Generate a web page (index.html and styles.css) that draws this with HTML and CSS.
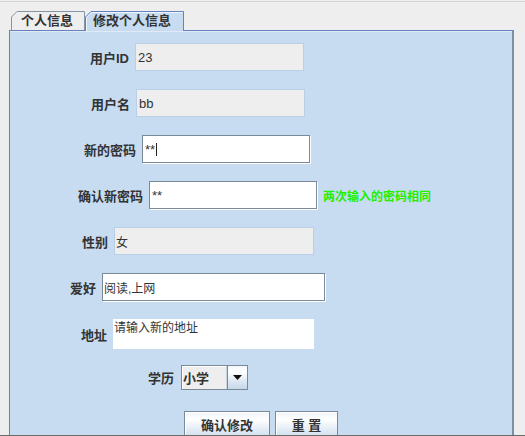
FILE: index.html
```html
<!DOCTYPE html>
<html lang="zh-CN">
<head>
<meta charset="utf-8">
<title>修改个人信息</title>
<link rel="stylesheet" href="styles.css">
</head>
<body>
<div class="page">
  <div class="topline"></div>
  <div class="tabs">
    <div class="tab tab-off">
      <svg class="tab-edge" width="74" height="19" viewBox="0 0 74 19">
        <polygon points="0,19 0,6 6,0 74,0 74,19" fill="#eeeeee"/>
        <polyline points="0.5,19 0.5,6 6,0.5 73.5,0.5 73.5,19" fill="none" stroke="#8595a6"/>
      </svg>
      <span class="tab-text">个人信息</span>
    </div>
    <div class="tab tab-on">
      <svg class="tab-edge" width="99" height="20" viewBox="0 0 99 20">
        <polygon points="0,20 0,6 6,0 99,0 99,20" fill="#c7dcf1"/>
        <polyline points="1.5,20 1.5,6.5 6.5,1.5 97.5,1.5" fill="none" stroke="#eef4fb"/>
        <polyline points="0.5,20 0.5,6 6,0.5 98.5,0.5 98.5,20" fill="none" stroke="#6382bf"/>
      </svg>
      <span class="tab-text">修改个人信息</span>
    </div>
  </div>
  <div class="panel">
    <div class="form">
      <div class="row r1">
        <span class="lbl">用户ID</span>
        <div class="field ro w169">23</div>
      </div>
      <div class="row r2">
        <span class="lbl">用户名</span>
        <div class="field ro w169">bb</div>
      </div>
      <div class="row r3">
        <span class="lbl">新的密码</span>
        <div class="field ed w168"><span class="pw">**</span><span class="caret"></span></div>
      </div>
      <div class="row r4">
        <span class="lbl">确认新密码</span>
        <div class="field ed w168"><span class="pw">**</span></div>
        <span class="hint">两次输入的密码相同</span>
      </div>
      <div class="row r5">
        <span class="lbl">性别</span>
        <div class="field ro w200 cjk">女</div>
      </div>
      <div class="row r6">
        <span class="lbl">爱好</span>
        <div class="field ed w223 cjk">阅读,上网</div>
      </div>
      <div class="row r7">
        <span class="lbl">地址</span>
        <div class="area">请输入新的地址</div>
      </div>
      <div class="row r8">
        <span class="lbl">学历</span>
        <div class="combo">
          <span class="combo-text">小学</span>
          <span class="combo-btn">
            <svg width="9" height="5" viewBox="0 0 9 5"><polygon points="0,0 9,0 4.5,5" fill="#111"/></svg>
          </span>
        </div>
      </div>
      <div class="btns">
        <button class="btn b1">确认修改</button>
        <button class="btn b2">重 置</button>
      </div>
    </div>
  </div>
  <div class="bottomline"></div>
</div>
</body>
</html>
```
FILE: styles.css
```css
* { box-sizing: border-box; }
html, body { margin: 0; padding: 0; }
body {
  background: #eeeeee;
  font-family: "Liberation Sans", "Noto Sans CJK SC", sans-serif;
  color: #333333;
}
.page {
  width: 525px;
  height: 436px;
  overflow: hidden;
}
.topline {
  margin-top: 1px;
  height: 1px;
  background: #d2d2d2;
}
.tabs {
  display: flex;
  align-items: flex-start;
  height: 19px;
  margin-top: 9px;
  padding-left: 11px;
}
.tab {
  position: relative;
  font-size: 13px;
  font-weight: bold;
  color: #333333;
  white-space: nowrap;
}
.tab-edge {
  position: absolute;
  left: 0;
  top: 0;
  display: block;
}
.tab-text {
  position: relative;
  display: block;
}
.tab-off {
  width: 74px;
  height: 19px;
  line-height: 19px;
  padding-left: 10px;
}
.tab-on {
  width: 99px;
  height: 20px;
  line-height: 19px;
  padding-left: 8px;
  z-index: 1;
}
.panel {
  margin-left: 9px;
  width: 505px;
  height: 405px;
  overflow: hidden;
  background: #c7dcf1;
  border-top: 1px solid #6382bf;
  border-left: 1px solid #6382bf;
  border-right: 2px solid #7d8fa3;
  box-shadow: inset 0 1px 0 #dfeaf6;
}
.form {
  display: flex;
  flex-direction: column;
  padding-top: 12px;
}
.row {
  display: flex;
  align-items: center;
  gap: 6px;
  height: 28px;
  margin-bottom: 18px;
}
.lbl {
  font-size: 13px;
  font-weight: bold;
  text-align: right;
  flex: none;
  color: #333333;
  white-space: nowrap;
}
.r1 .lbl { width: 119px; }
.r2 .lbl { width: 120px; }
.r3 .lbl { width: 126px; }
.r4 .lbl { width: 133px; }
.r5 .lbl { width: 98px; }
.r6 .lbl { width: 86px; }
.r7 .lbl { width: 97px; }
.r8 .lbl { width: 164px; }
.r7 { height: 30px; margin-bottom: 16px; }
.r8 { height: 25px; margin-bottom: 21px; gap: 7px; }
.field {
  height: 28px;
  flex: none;
  display: flex;
  align-items: center;
  padding-left: 2px;
  font-size: 13px;
  color: #333333;
}
.field.cjk { font-size: 12px; padding-left: 1px; }
.ro {
  background: #eeeeee;
  border: 1px solid #b8cfe5;
}
.ed {
  background: #ffffff;
  border: 1px solid #7a8a99;
  box-shadow: 1px 1px 0 #ffffff;
}
.w169 { width: 169px; }
.w168 { width: 168px; }
.w200 { width: 200px; }
.w223 { width: 223px; }
.pw {
  font-size: 13px;
  color: #333333;
  line-height: 1;
  align-self: flex-start;
  margin-top: 7px;
}
.caret {
  width: 1px;
  height: 13px;
  background: #222222;
  margin-left: 1px;
}
.hint {
  font-size: 12px;
  font-weight: bold;
  color: #22ee00;
  white-space: nowrap;
}
.area {
  width: 201px;
  height: 30px;
  background: #ffffff;
  font-size: 12px;
  line-height: 16px;
  padding-left: 1px;
  padding-top: 1px;
  color: #333333;
}
.combo {
  display: flex;
  width: 67px;
  height: 25px;
  border: 1px solid #7a8a99;
  background: #eeeeee;
}
.combo-text {
  flex: 1;
  display: flex;
  align-items: center;
  padding-left: 1px;
  font-size: 13px;
  font-weight: bold;
  color: #333333;
  border-right: 1px solid #c9d3dd;
  box-shadow: inset 1px 1px 0 #ffffff;
}
.combo-btn {
  width: 20px;
  flex: none;
  display: flex;
  align-items: center;
  justify-content: center;
  border-left: 1px solid #7a8a99;
  background: linear-gradient(to bottom, #f4f8fc 0%, #ffffff 25%, #d6e3f0 75%, #c6d7e9 100%);
}
.combo-btn svg { display: block; }
.btns {
  display: flex;
  gap: 5px;
  margin-left: 174px;
}
.btn {
  height: 26px;
  padding: 0;
  margin: 0;
  border: 1px solid #7a8a99;
  border-radius: 0;
  background: linear-gradient(to bottom, #eef3f9 0%, #ffffff 30%, #e5edf6 70%, #d3e0ee 100%);
  box-shadow: inset 1px 1px 0 #ffffff;
  font-family: "Liberation Sans", "Noto Sans CJK SC", sans-serif;
  font-size: 13px;
  font-weight: bold;
  color: #333333;
}
.b1 { width: 86px; }
.b2 { width: 63px; }
.bottomline {
  height: 1px;
  background: #6b6b6b;
}
```
